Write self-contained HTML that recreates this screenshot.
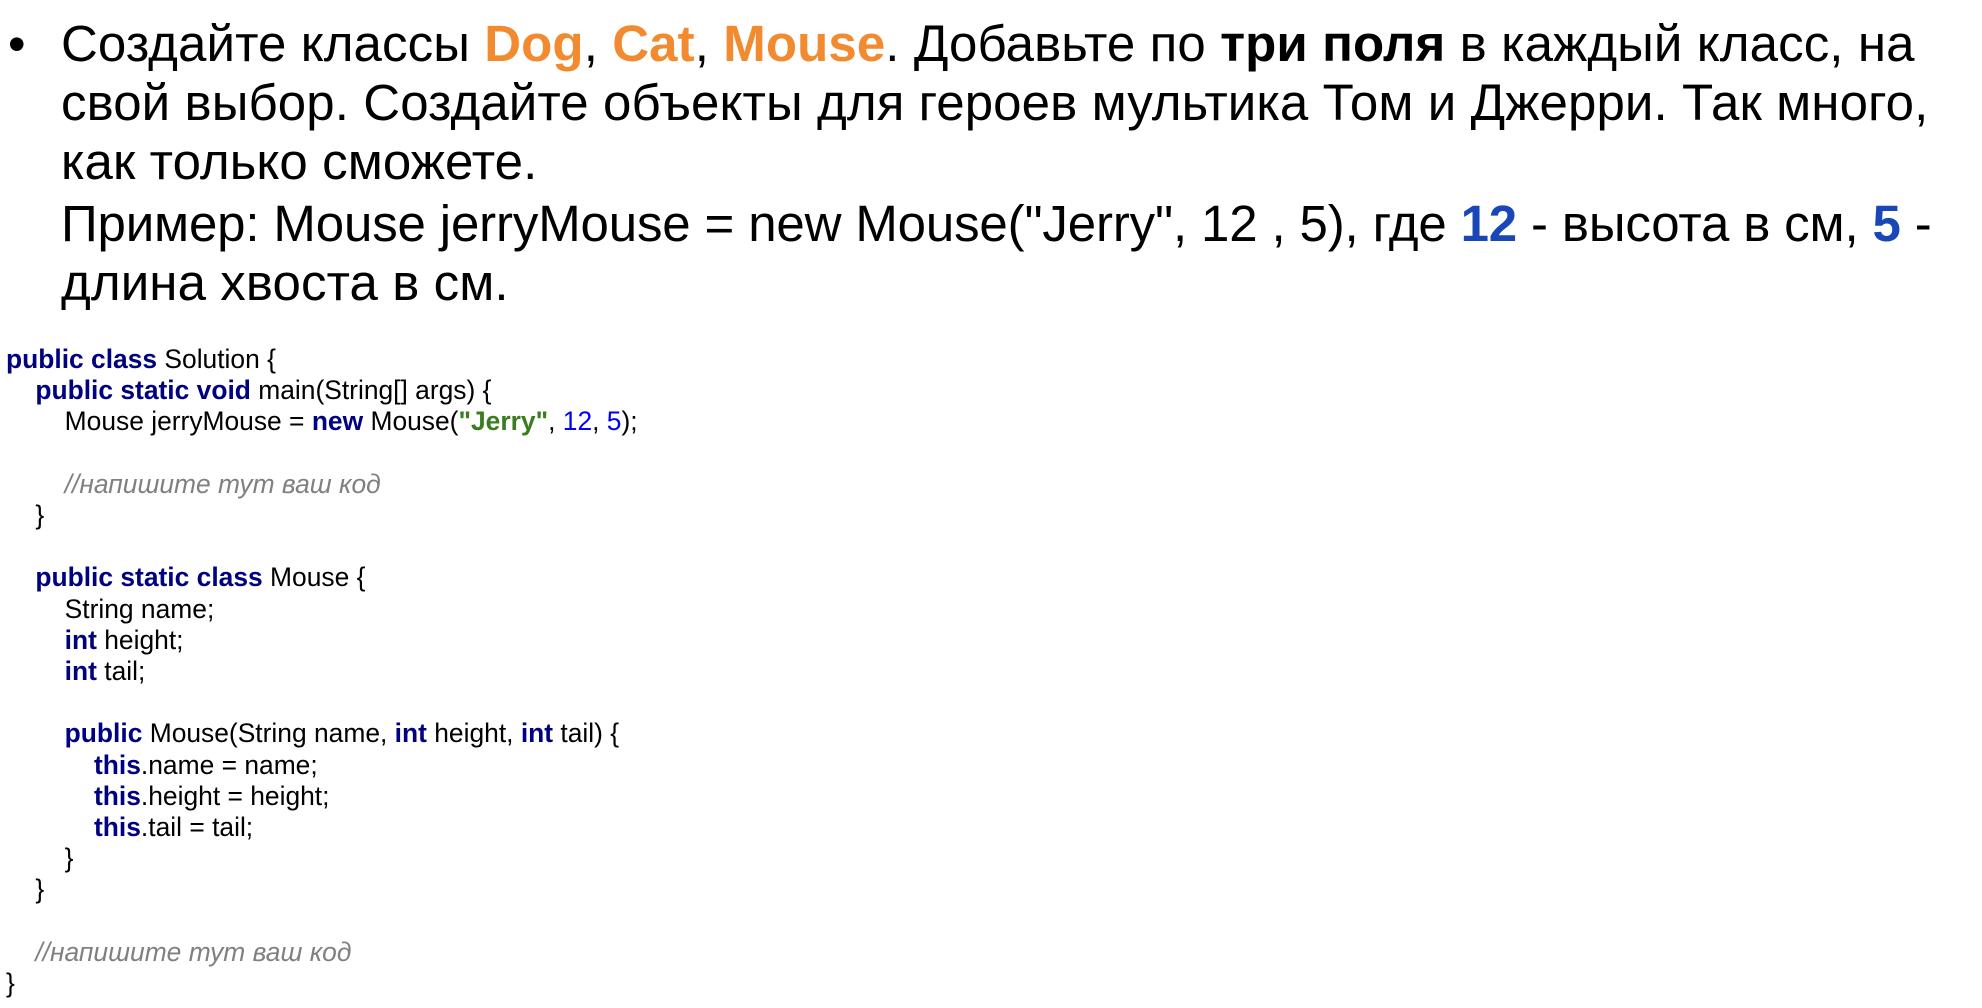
<!DOCTYPE html>
<html><head><meta charset="utf-8"><style>
body{margin:0;width:1982px;height:1008px;background:#fff;overflow:hidden;font-family:"Liberation Sans",Arial,sans-serif;color:#000}
.h{position:absolute;left:61px;font-size:51px;line-height:60px;white-space:nowrap;letter-spacing:0.1px}
.bul{position:absolute;left:8px;top:14px;font-size:50px;line-height:60px}
.o{color:#f28a30;font-weight:bold}
.b{color:#1a47b8;font-weight:bold}
.code{position:absolute;left:6px;top:344px;font-size:26.4px;line-height:31.2px;white-space:pre}
.k{color:#000080;font-weight:bold}
.s{color:#3a7d1e;font-weight:bold}
.n{color:#0000ff}
.c{color:#808080;font-style:italic}
</style></head><body>
<div class="bul">•</div>
<div class="h" style="top:14px">Создайте классы <span class="o">Dog</span>, <span class="o">Cat</span>, <span class="o">Mouse</span>. Добавьте по <b>три поля</b> в каждый класс, на</div>
<div class="h" style="top:73px">свой выбор. Создайте объекты для героев мультика Том и Джерри. Так много,</div>
<div class="h" style="top:132px">как только сможете.</div>
<div class="h" style="top:194px;letter-spacing:-0.15px">Пример: Mouse jerryMouse = new Mouse("Jerry", 12 , 5), где <span class="b">12</span> - высота в см, <span class="b">5</span> -</div>
<div class="h" style="top:253px">длина хвоста в см.</div>
<div class="code"><span class="k">public class</span> Solution {
    <span class="k">public static void</span> main(String[] args) {
        Mouse jerryMouse = <span class="k">new</span> Mouse(<span class="s">"Jerry"</span>, <span class="n">12</span>, <span class="n">5</span>);

        <span class="c">//напишите тут ваш код</span>
    }

    <span class="k">public static class</span> Mouse {
        String name;
        <span class="k">int</span> height;
        <span class="k">int</span> tail;

        <span class="k">public</span> Mouse(String name, <span class="k">int</span> height, <span class="k">int</span> tail) {
            <span class="k">this</span>.name = name;
            <span class="k">this</span>.height = height;
            <span class="k">this</span>.tail = tail;
        }
    }

    <span class="c">//напишите тут ваш код</span>
}</div>
</body></html>
